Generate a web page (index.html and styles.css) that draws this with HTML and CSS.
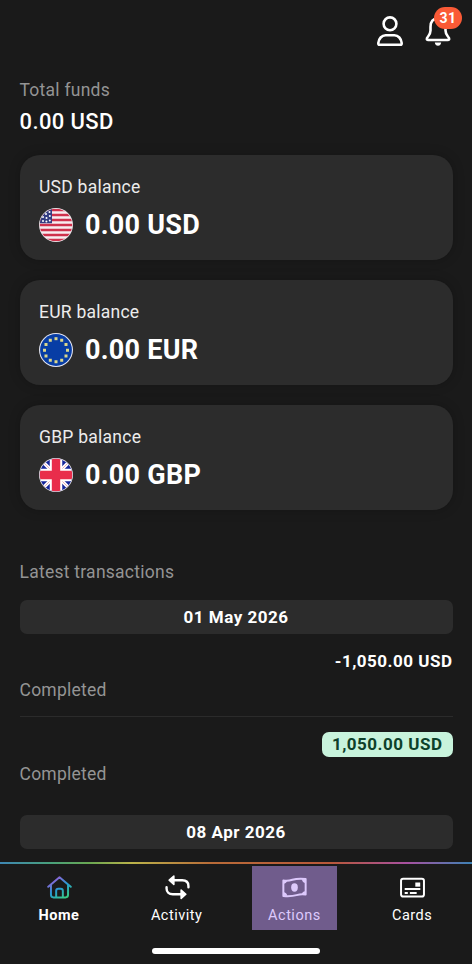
FILE: index.html
```html
<!DOCTYPE html>
<html lang="en">
<head>
<meta charset="utf-8">
<title>Accounts</title>
<link rel="stylesheet" href="styles.css">
</head>
<body>
<div class="app">
  <header class="topbar">
    <svg class="icon-user" viewBox="0 0 28 32" fill="none" stroke="#fff" stroke-width="2.6"><circle cx="14" cy="8.8" r="6.4"/><path d="M3.5 29.7Q2.2 29.7 2.3 28.2C2.7 23.5 5.8 20.3 9.6 20.3H18.4C22.200 20.300 25.300 23.500 25.700 28.200Q25.800 29.700 24.500 29.700Z" stroke-linejoin="round"/></svg>
    <div class="bell">
      <svg viewBox="0 0 28 32" fill="none" stroke="#fff" stroke-width="2.6" stroke-linejoin="round" stroke-linecap="round"><path d="M14 3.500C8.500 3.500 6.500 7.500 6.500 12V15.500C6.500 19 4.500 20.500 3 23.200Q2.300 25 4.300 25H23.700Q25.700 25 25 23.200C23.500 20.500 21.500 19 21.500 15.500V12C21.500 7.500 19.500 3.500 14 3.500Z"/><path d="M10.800 27.500H17.200Q16.600 30.800 14 30.800T10.800 27.500Z" fill="#fff" stroke="none"/></svg>
      <span class="badge">31</span>
    </div>
  </header>
  <main class="content">
    <div class="label muted">Total funds</div>
    <div class="total">0.00 USD</div>
    <section class="cards">
      <article class="card">
        <div class="label">USD balance</div>
        <div class="balance">
          <svg class="flag" viewBox="0 0 34 34"><defs><clipPath id="c"><circle cx="17" cy="17" r="16.200"/></clipPath></defs><circle cx="17" cy="17" r="17" fill="#e9e3e8"/><g clip-path="url(#c)"><path fill="#f7edf0" d="M0 0h34v34H0z"/><path stroke="#cf314c" stroke-width="2.500" d="M0 1.900h34M0 6.900h34M0 11.900h34M0 17h34M0 22h34M0 27h34M0 32h34"/><path fill="#343d82" d="M0 0h13v15.300H0z"/><g fill="#fff"><circle cx="10.500" cy="4" r="1"/><circle cx="7" cy="6" r="1"/><circle cx="10.800" cy="8" r="1"/><circle cx="4" cy="9" r="1"/><circle cx="7.500" cy="10" r="1"/><circle cx="10.800" cy="12.500" r="1"/><circle cx="4" cy="13" r="1"/><circle cx="7.400" cy="13.500" r="1"/></g></g></svg>
          <span>0.00 USD</span>
        </div>
      </article>
      <article class="card">
        <div class="label">EUR balance</div>
        <div class="balance">
          <svg class="flag" viewBox="0 0 34 34"><circle cx="17" cy="17" r="17" fill="#e3e5f1"/><circle cx="17" cy="17" r="15.900" fill="#073da5"/><g fill="#dbd78b"><path d="M15.500 4.200h3v3h-3z"/><path d="M21.200 5.700h3v3h-3zM25.500 10h3v3h-3zM27 15.800h3v3h-3zM25.500 21.500h3v3h-3zM21.200 25.700h3v3h-3zM15.500 27.200h3v3h-3zM9.800 25.700h3v3h-3zM5.500 21.500h3v3h-3zM4 15.800h3v3H4zM5.500 10h3v3h-3zM9.800 5.700h3v3h-3z"/></g></svg>
          <span>0.00 EUR</span>
        </div>
      </article>
      <article class="card">
        <div class="label">GBP balance</div>
        <div class="balance">
          <svg class="flag" viewBox="0 0 34 34"><circle cx="17" cy="17" r="17" fill="#eee9ed"/><g clip-path="url(#c)"><path fill="#14259b" d="M0 0h34v34H0z"/><path d="M2 2l30 30M32 2L2 32" stroke="#fff" stroke-width="3.600"/><path d="M2 2l30 30M32 2L2 32" stroke="#e8abb7" stroke-width="1"/><path d="M17 0v34M0 17h34" stroke="#fff" stroke-width="12.500"/><path d="M17 0v34M0 17h34" stroke="#e92d4b" stroke-width="8.400"/></g></svg>
          <span>0.00 GBP</span>
        </div>
      </article>
    </section>
    <section class="transactions">
      <h2 class="label muted">Latest transactions</h2>
      <div class="date">01 May 2026</div>
      <div class="entry divided">
        <div class="sum">-1,050.00 USD</div>
        <div class="label muted">Completed</div>
      </div>
      <div class="entry">
        <div class="sum"><span class="credit">1,050.00 USD</span></div>
        <div class="label muted">Completed</div>
      </div>
      <div class="date">08 Apr 2026</div>
    </section>
  </main>
  <footer class="footer">
    <nav class="nav">
      <a class="tab active">
        <svg viewBox="0 0 24 24" fill="none" stroke="url(#g)" stroke-width="1.900" stroke-linecap="round" stroke-linejoin="round"><defs><linearGradient id="g" x1="6" y1="4" x2="18" y2="23" gradientUnits="userSpaceOnUse"><stop stop-color="#9260d8"/><stop offset=".48" stop-color="#259bd2"/><stop offset="1" stop-color="#3bd17d"/></linearGradient></defs><path d="M1.200 11.300 12 2.200l10.800 9.100M3.800 9.500V19q0 2.500 2.500 2.500h11.400q2.500 0 2.500-2.500V9.500M8.800 21.300v-6q0-2 2-2h2.400q2 0 2 2v6"/></svg>
        <span>Home</span>
      </a>
      <a class="tab">
        <svg viewBox="0 0 24 24" fill="none" stroke="#fff" stroke-width="2.300" stroke-linecap="round" stroke-linejoin="round"><path d="M7 5H16.500c3.900 0 6 2.200 6 5.500v1.300M17 18.500H7.500c-3.900 0-6-2.200-6-5.500v-1.300"/><path fill="#fff" stroke-width="1.500" d="M8.500 1v8L4 5ZM15.500 14.500v8l4.500-4Z"/></svg>
        <span>Activity</span>
      </a>
      <a class="tab highlighted">
        <svg viewBox="0 0 24 24" fill="none" stroke="#ddc9fc" stroke-width="1.900" stroke-linejoin="round"><path d="M1.300 5.200Q5 6.200 10 4.600T22.700 3.800V18.800Q19 17.800 14 19.300T1.300 20.200Z"/><ellipse cx="12" cy="12" rx="3.200" ry="4" fill="#ddc9fc" stroke="none"/><path fill="#ddc9fc" stroke="none" d="M1.300 5.200h3.700q-.5 2.800-3.700 3.200zM22.700 3.800v3.800q-3.100-.3-3.700-3.600zM1.300 20.200v-4q3.300.4 3.700 3.600zM22.700 18.800h-3.800q.5-3 3.800-3.400z"/></svg>
        <span>Actions</span>
      </a>
      <a class="tab">
        <svg viewBox="0 0 24 24" fill="none" stroke="#fff" stroke-width="1.900"><rect x="1" y="3.500" width="22" height="17.200" rx="2"/><path fill="#fff" stroke="none" d="M14.700 7.200h4.700v4h-4.700z"/><path d="M4.500 13.500h15M4.500 17.200h3M9.500 17.200h6.500"/></svg>
        <span>Cards</span>
      </a>
    </nav>
    <div class="handle"></div>
  </footer>
</div>
</body>
</html>
```
FILE: styles.css
```css
* { box-sizing: border-box; }
body { margin: 0; background: #1a1a1a; color: #fff; font-family: Roboto, sans-serif; font-size: 17px; letter-spacing: .5px; }
.app { width: 472px; height: 964px; display: flex; flex-direction: column; overflow: hidden; }
.topbar { height: 79px; flex: none; display: flex; justify-content: flex-end; align-items: flex-start; gap: 20px; padding: 15px 20px 0 0; }
.icon-user, .bell svg { width: 28px; height: 32px; display: block; }
.bell { position: relative; }
.badge { position: absolute; left: 10px; top: -8px; width: 28px; height: 22px; border-radius: 11px; background: #fa5a36; font-size: 14px; font-weight: 700; line-height: 22px; text-align: center; }
.content { flex: 1; min-height: 0; padding: 0 19.5px; overflow: hidden; }
.label { color: #ececec; font-size: 17.500px; font-weight: 400; line-height: 22px; letter-spacing: .25px; margin: 0; }
.muted { color: #949494; }
.total { font-size: 22px; font-weight: 500; line-height: 28px; letter-spacing: .38px; margin-top: 7px; }
.cards { display: flex; flex-direction: column; gap: 20px; margin-top: 19px; }
.card { height: 105px; padding: 21px 19.500px; border-radius: 20px; background: #2c2c2c; box-shadow: 0 0 12px rgba(0, 0, 0, .22); }
.balance { display: flex; align-items: center; gap: 12px; height: 34px; margin-top: 10px; font-size: 27px; line-height: 30px; letter-spacing: .25px; font-weight: 700; }
.flag { width: 34px; height: 34px; flex: none; }
.transactions { margin-top: 51px; }
.date { height: 34px; margin-top: 17px; border-radius: 7px; background: #2c2c2c; text-align: center; line-height: 34px; font-weight: 700; }
.entry { height: 83px; padding-top: 14px; }
.divided + .entry { padding-top: 15px; }
.entry + .date { margin-top: 15px; }
.divided { border-bottom: 1.500px solid #2b2b2b; }
.sum { display: flex; justify-content: flex-end; height: 26px; line-height: 26px; font-weight: 700; margin-bottom: 5px; }
.credit { height: 25px; line-height: 25px; padding: 0 10px; border-radius: 7px; background: #c8f3dc; color: #0d402a; }
.footer { flex: none; height: 102px; border-top: 2px solid; border-image: linear-gradient(90deg, #3e86b4, #49a17b 11%, #69a752 19%, #bbb34a 28%, #b96b38 45%, #b9583a 70%, #a851a0 86%, #3b83b5) 1; }
.nav { display: grid; grid-template-columns: repeat(4, 1fr); justify-items: center; padding: 2px 1px 0 0; }
.tab { width: 85px; height: 64px; display: flex; flex-direction: column; align-items: center; padding-top: 9px; font-size: 14.500px; line-height: 18px; }
.tab svg { width: 25px; height: 25px; margin: 0 0 7px 1px; }
.active { font-weight: 700; }
.highlighted { background: #705c8c; color: #ddc9fc; }
.handle { width: 168px; height: 6px; margin: 18px auto 0; border-radius: 3px; background: #fff; }
```
